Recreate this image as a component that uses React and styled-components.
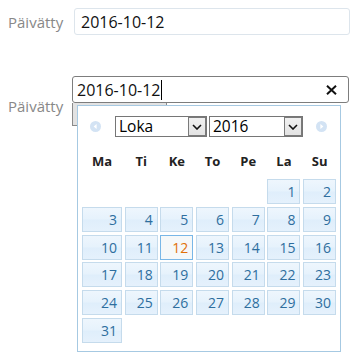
import React from 'react'
import styled, { createGlobalStyle } from 'styled-components'

const GlobalStyle = createGlobalStyle`
  html, body {
    margin: 0;
    padding: 0;
    background: #fff;
  }
  body {
    font-family: "Open Sans", "Noto Sans", sans-serif;
  }
`

const monthDays = [
  null, null, null, null, null, 1, 2,
  3, 4, 5, 6, 7, 8, 9,
  10, 11, 12, 13, 14, 15, 16,
  17, 18, 19, 20, 21, 22, 23,
  24, 25, 26, 27, 28, 29, 30,
  31,
]
const dayNames = ['Ma', 'Ti', 'Ke', 'To', 'Pe', 'La', 'Su']

const ArrowIcon = ({ dir }) => (
  <svg width="11" height="11" viewBox="0 0 11 11">
    <circle cx="5.5" cy="5.5" r="5.5" fill="#d3e3f4" />
    {dir === 'left'
      ? <polygon points="6.6,3 3.6,5.5 6.6,8" fill="#fff" />
      : <polygon points="4.4,3 7.4,5.5 4.4,8" fill="#fff" />}
  </svg>
)

const Chevron = () => (
  <svg width="10" height="6" viewBox="0 0 10 6">
    <polyline points="1,1 5,5 9,1" fill="none" stroke="#111" strokeWidth="1.6" />
  </svg>
)

const CloseIcon = () => (
  <svg width="11" height="10" viewBox="0 0 11 10">
    <path d="M1 0.8 L10 9.2 M10 0.8 L1 9.2" stroke="#111" strokeWidth="2" />
  </svg>
)

const App = () => {
  return (
    <Page>
      <GlobalStyle />
      <Row>
        <Label $width={66}>Päivätty</Label>
        <TextBox>2016-10-12</TextBox>
      </Row>
      <Row $top={41}>
        <Label $width={64} $offset={8}>Päivätty</Label>
        <Group>
          <ActiveBox>
            <span>2016-10-12</span>
            <Caret />
            <Clear><CloseIcon /></Clear>
          </ActiveBox>
          <HiddenButton />
          <Calendar>
            <Header>
              <NavIcon><ArrowIcon dir="left" /></NavIcon>
              <Select $width={92}>
                <SelectText>Loka</SelectText>
                <SelectArrow><Chevron /></SelectArrow>
              </Select>
              <Select $width={94} $gap={2}>
                <SelectText>2016</SelectText>
                <SelectArrow><Chevron /></SelectArrow>
              </Select>
              <NavIcon $gap={12.5}><ArrowIcon dir="right" /></NavIcon>
            </Header>
            <DayNames>
              {dayNames.map(d => <DayName key={d}>{d}</DayName>)}
            </DayNames>
            <Days>
              {monthDays.map((d, i) =>
                d === null
                  ? <Empty key={i} />
                  : <Day key={i} $active={d === 12}>{d}</Day>
              )}
            </Days>
          </Calendar>
        </Group>
      </Row>
    </Page>
  )
}

const Page = styled.div`
  padding: 8px 0 0 8px;
  width: 358px;
  height: 358px;
  box-sizing: border-box;
  overflow: hidden;
`
const Row = styled.div`
  display: flex;
  align-items: center;
  margin-top: ${p => p.$top || 0}px;
`
const Label = styled.div`
  width: ${p => p.$width}px;
  flex-shrink: 0;
  color: #888;
  font-size: 15px;
  align-self: ${p => (p.$offset ? 'flex-start' : 'center')};
  margin-top: ${p => p.$offset ? 20 : 0}px;
`
const TextBox = styled.div`
  width: 276px;
  height: 27px;
  box-sizing: border-box;
  border: 1px solid #dde5ec;
  border-radius: 3px;
  padding-left: 6px;
  display: flex;
  align-items: center;
  font-size: 16px;
  color: #111;
`
const Group = styled.div`
  position: relative;
  width: 277px;
  height: 280px;
`
const ActiveBox = styled.div`
  width: 277px;
  height: 27px;
  box-sizing: border-box;
  border: 1px solid #7d7d7d;
  border-radius: 3px;
  padding-left: 4px;
  display: flex;
  align-items: center;
  font-size: 16px;
  color: #111;
`
const Caret = styled.span`
  width: 1px;
  height: 20px;
  background: #000;
  margin-left: 1px;
`
const Clear = styled.span`
  margin-left: auto;
  margin-right: 11px;
  display: flex;
`
const HiddenButton = styled.div`
  width: 95px;
  height: 23px;
  box-sizing: border-box;
  background: #e2e2e2;
  border: 1px solid #8a8a8a;
  border-top: 0;
`
const Calendar = styled.div`
  position: absolute;
  left: 5px;
  top: 29px;
  width: 264px;
  height: 247px;
  box-sizing: border-box;
  border: 1px solid #a6c9e2;
  background: #fff;
  padding: 0 4px;
`
const Header = styled.div`
  height: 41px;
  display: flex;
  align-items: center;
  padding-left: 7.5px;
`
const NavIcon = styled.span`
  display: flex;
  margin-left: ${p => p.$gap || 0}px;
  margin-right: ${p => (p.$gap ? 0 : 14.5)}px;
`
const Select = styled.div`
  width: ${p => p.$width}px;
  height: 21px;
  box-sizing: border-box;
  margin-left: ${p => p.$gap || 0}px;
  border: 1px solid #767676;
  display: flex;
  align-items: stretch;
  background: #fff;
`
const SelectText = styled.span`
  flex: 1;
  font-size: 15.5px;
  line-height: 19px;
  padding-left: 3px;
  color: #000;
`
const SelectArrow = styled.span`
  width: 18px;
  box-sizing: border-box;
  border: 1px solid #7a7a7a;
  margin: 0;
  background: linear-gradient(#f0f0f0, #e3e3e3);
  display: flex;
  align-items: center;
  justify-content: center;
`
const DayNames = styled.div`
  display: grid;
  grid-template-columns: 40px repeat(6, 33px);
  column-gap: 2.7px;
  height: 27px;
  align-items: center;
  margin-bottom: 5px;
`
const DayName = styled.div`
  text-align: center;
  font-size: 13px;
  font-weight: 700;
  color: #222;
`
const Days = styled.div`
  display: grid;
  grid-template-columns: 40px repeat(6, 33px);
  grid-auto-rows: 25px;
  column-gap: 2.7px;
  row-gap: 2.8px;
`
const Empty = styled.div``
const Day = styled.div`
  box-sizing: border-box;
  border: 1px solid ${p => (p.$active ? '#79b7e7' : '#c5dbec')};
  background: ${p => (p.$active
    ? '#f5f8f9'
    : 'linear-gradient(#eef6fd 0%, #e6f2fc 48%, #dfeefb 52%, #e5f1fc 100%)')};
  color: ${p => (p.$active ? '#e17009' : '#2e6e9e')};
  text-align: right;
  padding-right: 4px;
  font-size: 14px;
  line-height: 23px;
`

export default App
